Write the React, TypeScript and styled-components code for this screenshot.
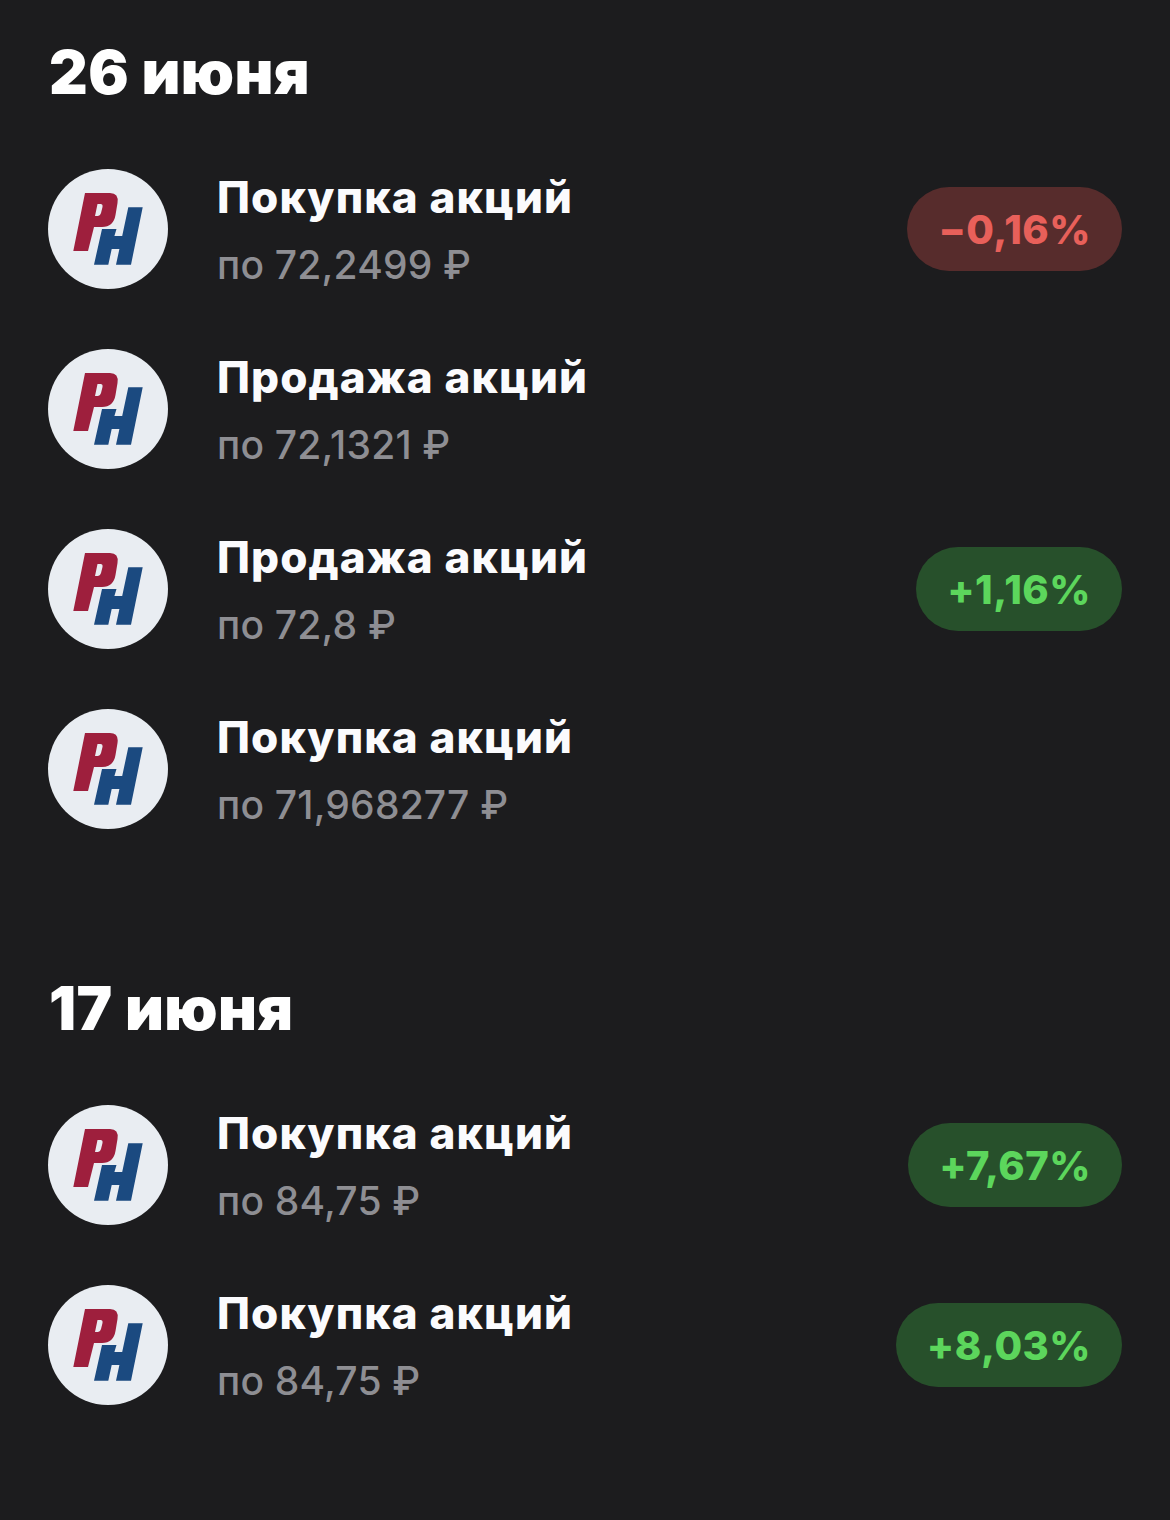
import React from "react";
import styled, { createGlobalStyle } from "styled-components";

const GlobalStyle = createGlobalStyle`
  html, body {
    margin: 0;
    padding: 0;
    background: #1c1c1e;
  }
`;

const Page = styled.div`
  width: 1170px;
  height: 1520px;
  box-sizing: border-box;
  padding: 36px 48px 0;
  background: #1c1c1e;
  font-family: Inter, "Noto Sans", sans-serif;
  overflow: hidden;
`;

const Section = styled.section`
  margin-bottom: 143px;
`;

const DateTitle = styled.h2`
  margin: 0 0 61px 1px;
  font-size: 60px;
  line-height: 72px;
  font-weight: 900;
  letter-spacing: 0.4px;
  color: #ffffff;
`;

const List = styled.div`
  display: flex;
  flex-direction: column;
  gap: 60px;
`;

const Row = styled.div`
  display: flex;
  align-items: center;
  height: 120px;
`;

const Avatar = styled.svg`
  flex: none;
  width: 120px;
  height: 120px;
`;

const Info = styled.div`
  flex: 1;
  margin-left: 49px;
  padding-top: 4px;
  display: flex;
  flex-direction: column;
  gap: 16px;
`;

const Title = styled.div`
  font-size: 44px;
  line-height: 52px;
  font-weight: 800;
  letter-spacing: 1.1px;
  color: #fbfbfd;
`;

const Price = styled.div`
  font-size: 39px;
  line-height: 52px;
  font-weight: 500;
  letter-spacing: 0.2px;
  color: #8e8e93;
`;

const Badge = styled.div<{ $tone: "loss" | "gain" }>`
  height: 84px;
  padding: 0 31px;
  display: flex;
  align-items: center;
  border-radius: 42px;
  font-size: 40px;
  font-weight: 800;
  letter-spacing: 0.5px;
  background: ${(props) => (props.$tone === "loss" ? "#572c2c" : "#27502b")};
  color: ${(props) => (props.$tone === "loss" ? "#e8605a" : "#5cd65c")};
`;

const Logo = () => (
  <Avatar viewBox="0 0 120 120">
    <circle cx="60" cy="60" r="60" fill="#e9edf2" />
    <path
      fill="#1b4a80"
      d="M46 95.7 L54 60 L68.5 60 L66.4 67 L74.2 67 L80.3 38.3 L94.7 38.3 L83 95.7 L68 95.7 L71.4 80 L63.7 80 L60.3 95.7 Z"
    />
    <path
      fill="#9e1f3d"
      fillRule="evenodd"
      d="M37 24 L62 24 Q71 24 69.5 34 L67.5 46 Q65.5 58 54 58 L46 58 L40 82 L25.3 82 Z M49.5 35 L47 47 L49.5 47 Q52 47 53 44 L54.5 38 Q55 35 52.5 35 Z"
    />
  </Avatar>
);

interface Trade {
  title: string;
  price: string;
  change?: string;
}

const days: { date: string; trades: Trade[] }[] = [
  {
    date: "26 июня",
    trades: [
      { title: "Покупка акций", price: "по 72,2499 ₽", change: "−0,16%" },
      { title: "Продажа акций", price: "по 72,1321 ₽" },
      { title: "Продажа акций", price: "по 72,8 ₽", change: "+1,16%" },
      { title: "Покупка акций", price: "по 71,968277 ₽" },
    ],
  },
  {
    date: "17 июня",
    trades: [
      { title: "Покупка акций", price: "по 84,75 ₽", change: "+7,67%" },
      { title: "Покупка акций", price: "по 84,75 ₽", change: "+8,03%" },
    ],
  },
];

function App() {
  return (
    <Page>
      <GlobalStyle />
      {days.map((day) => (
        <Section key={day.date}>
          <DateTitle>{day.date}</DateTitle>
          <List>
            {day.trades.map((trade, i) => (
              <Row key={i}>
                <Logo />
                <Info>
                  <Title>{trade.title}</Title>
                  <Price>{trade.price}</Price>
                </Info>
                {trade.change && (
                  <Badge $tone={trade.change.startsWith("+") ? "gain" : "loss"}>
                    {trade.change}
                  </Badge>
                )}
              </Row>
            ))}
          </List>
        </Section>
      ))}
    </Page>
  );
}

export default App;
